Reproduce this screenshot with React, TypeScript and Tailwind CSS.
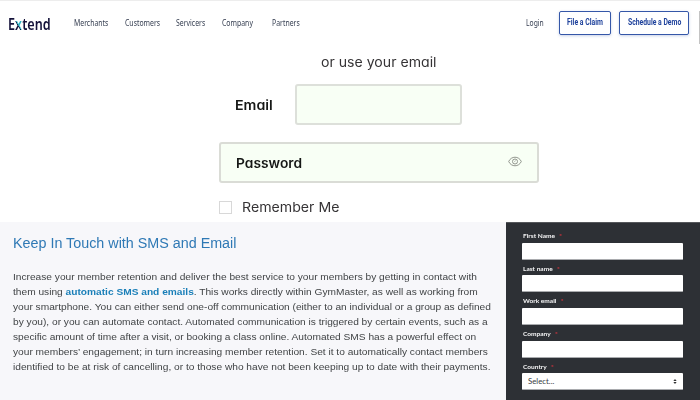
import type { ReactNode } from 'react';

function Fit({ box, text, children }: { box: string; text: string; children: ReactNode }) {
  return (
    <span className={`block shrink-0 whitespace-nowrap ${box}`}>
      <span className={`inline-block origin-left ${text}`}>{children}</span>
    </span>
  );
}

const nav = [
  { label: 'Merchants', box: 'w-[51px]' },
  { label: 'Customers', box: 'w-[50.5px]' },
  { label: 'Servicers', box: 'w-[46.5px]' },
  { label: 'Company', box: 'w-[49.5px]' },
  { label: 'Partners', box: 'w-[28px]' },
];

const paragraph: ReactNode[] = [
  'Increase your member retention and deliver the best service to your members by getting in contact with',
  <>
    them using <b className="font-bold text-[#1a7fb8]">automatic SMS and emails</b>. This works directly within
    GymMaster, as well as working from
  </>,
  'your smartphone. You can either send one-off communication (either to an individual or a group as defined',
  'by you), or you can automate contact. Automated communication is triggered by certain events, such as a',
  'specific amount of time after a visit, or booking a class online. Automated SMS has a powerful effect on',
  'your members’ engagement; in turn increasing member retention. Set it to automatically contact members',
  'identified to be at risk of cancelling, or to those who have not been keeping up to date with their payments.',
];

const fields = ['First Name', 'Last name', 'Work email', 'Company'];

function Label({ children }: { children: string }) {
  return (
    <div className="h-[11.7px] pl-[0.7px] text-[6.2px] leading-[10px] font-bold text-[#f4f4f5]">
      <Fit box="w-[100px]" text="scale-x-[1.06]">
        {children}
        <span className="ml-[4px] text-[#c8323c]">*</span>
      </Fit>
    </div>
  );
}

function Header() {
  return (
    <header className="flex h-[45px] items-start border-t border-[#ededed] bg-white font-['Noto_Sans',sans-serif] text-[#343d50]">
      <div className="pt-[12.5px] pl-[8px]">
        <Fit box="w-[66px] text-[16.5px] leading-[20px] font-semibold text-[#14123a]" text="scale-x-[.765]">
          E
          <span className="bg-[linear-gradient(to_top_right,#14123a_56%,#2bb5c4_58%)] bg-[length:100%_12px] bg-[position:0_9px] bg-no-repeat bg-clip-text text-transparent">
            x
          </span>
          tend
        </Fit>
      </div>
      <nav className="flex pt-[16px] text-[8.8px] leading-[12px]">
        {nav.map((n) => (
          <Fit key={n.label} box={n.box} text="scale-x-[.785]">
            {n.label}
          </Fit>
        ))}
      </nav>
      <div className="ml-auto flex items-center pt-[10px] pr-[10px] text-[8.8px]">
        <Fit box="w-[33px] leading-[12px]" text="scale-x-[.77]">
          Login
        </Fit>
        <button className="mr-[8px] flex h-[24px] w-[52px] items-center rounded-[2px] border border-[#3557a8] pl-[7px] font-['Roboto',sans-serif] font-bold text-[#1f429c] shadow-[0_1px_3px_#3557a844]">
          <Fit box="w-[36px]" text="scale-x-[.78]">
            File a Claim
          </Fit>
        </button>
        <button className="flex h-[24px] w-[70px] items-center rounded-[2px] border border-[#3557a8] pl-[7.5px] font-['Roboto',sans-serif] font-bold text-[#1f429c] shadow-[0_1px_3px_#3557a844]">
          <Fit box="w-[53px]" text="scale-x-[.775]">
            Schedule a Demo
          </Fit>
        </button>
      </div>
      <div className="mt-[10px] h-[33px] w-px bg-[#c4c4c4]" />
    </header>
  );
}

function LoginForm() {
  return (
    <section className="h-[177px] pl-[219px] font-['Inter',sans-serif] text-[13px] leading-[16px] text-[#353335] [font-feature-settings:'cv11']">
      <div className="pt-[9px] pl-[102px]">
        <Fit box="w-[116px]" text="scale-x-[1.085]">
          or use your email
        </Fit>
      </div>
      <div className="mt-[14px] flex items-center pl-[16px]">
        <Fit box="w-[60px] pt-[1px] font-semibold text-[#161816]" text="scale-x-[1.095]">
          Email
        </Fit>
        <div className="h-[41px] w-[167px] rounded-[3px] border-2 border-[#dde0da] bg-[#f8fff5]" />
      </div>
      <div className="mt-[17px] flex h-[41px] w-[320px] items-center justify-between rounded-[3px] border-2 border-[#dadcd6] bg-[#f8fff5] pr-[15px] pl-[14.5px]">
        <Fit box="w-[66px] pt-[1px] font-semibold text-[#161816]" text="scale-x-[1.06]">
          Password
        </Fit>
        <svg viewBox="0 0 14 11" className="-mt-[3px] h-[11px] w-[14px] fill-none stroke-[#92968e]">
          <path d="M.7 5.5C3.2-.2 10.800-.2 13.300 5.500 10.800 11.200 3.200 11.200.7 5.500Z" />
          <circle cx="7" cy="5.500" r="2.500" />
          <path d="M6.500 5.500 7.500 4.800" />
        </svg>
      </div>
      <div className="mt-[16px] flex items-center">
        <div className="mr-[10px] h-[13px] w-[13px] border border-[#d8d8d8]" />
        <Fit box="w-[98px]" text="scale-x-[1.088]">
          Remember Me
        </Fit>
      </div>
    </section>
  );
}

export default function App() {
  return (
    <div className="h-[400px] w-[700px] overflow-hidden bg-white">
      <Header />
      <LoginForm />
      <div className="flex h-[178px]">
        <article className="w-[506px] bg-[#f7f7fa] pl-[13px] font-['Liberation_Sans',Arial,sans-serif]">
          <h2 className="pt-[12px] text-[14px] leading-[18px] text-[#2f79b5]">
            <Fit box="w-[226px]" text="scale-x-[1.023]">
              Keep In Touch with SMS and Email
            </Fit>
          </h2>
          <div className="mt-[17px] -ml-[0.4px] text-[9.5px] leading-[15px] text-[#414446]">
            {paragraph.map((line, i) => (
              <Fit key={i} box="h-[15px] w-[480px]" text="scale-x-[1.07]">
                {line}
              </Fit>
            ))}
          </div>
        </article>
        <form className="w-[194px] border-t border-[#55575b] bg-[#2d3035] pt-[8px] pl-[16px] font-['Lato',sans-serif]">
          {fields.map((f) => (
            <div key={f} className="h-[32.700px]">
              <Label>{f}</Label>
              <div className="h-[17px] w-[161px] rounded-[1px] border-b border-[#a9abae] bg-white" />
            </div>
          ))}
          <Label>Country</Label>
          <div className="flex h-[17px] w-[161px] items-center justify-between rounded-[1px] border-b border-[#a9abae] bg-white pt-px pr-[6px] pl-[6px] text-[7.8px] text-[#36393d]">
            Select...
            <svg viewBox="0 0 4 6" className="h-[5px] w-[4px] fill-[#333]">
              <path d="M2 0 4 2.500H0ZM2 6 0 3.500H4Z" />
            </svg>
          </div>
        </form>
      </div>
    </div>
  );
}
